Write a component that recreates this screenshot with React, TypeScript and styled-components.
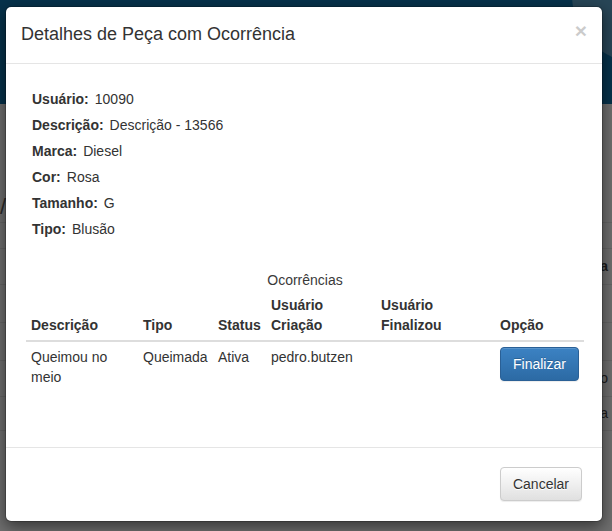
import React from "react";
import styled, { createGlobalStyle } from "styled-components";

const GlobalStyle = createGlobalStyle`
  html, body { margin: 0; padding: 0; }
  body {
    font-family: "Liberation Sans", Arial, Helvetica, sans-serif;
    font-size: 14px;
    line-height: 1.42857;
    color: #333;
    background: #6f6f6f;
  }
  * { box-sizing: border-box; }
`;

const Page = styled.div`
  position: relative;
  width: 612px;
  height: 531px;
  overflow: hidden;
  background: #6f6f6f;
`;

const Navbar = styled.div`
  position: relative;
  height: 104px;
  background: #06324b;
  overflow: hidden;
`;

const Avatar = styled.div`
  position: absolute;
  left: 572px;
  top: -73px;
  width: 136px;
  height: 136px;
  border-radius: 50%;
  background: #284657;
`;

const BgContent = styled.div`
  display: flex;
  flex-direction: column;
  padding-top: 88px;
`;

const BgHeading = styled.div`
  height: 30px;
  font-size: 22px;
  color: #2a2a2a;
  line-height: 30px;
  padding-left: 0;
  overflow: hidden;
  white-space: nowrap;
`;

const BgRow = styled.div<{ $h: number; $bold?: boolean }>`
  height: ${(p) => p.$h}px;
  border-top: 1px solid #656565;
  display: flex;
  align-items: center;
  justify-content: flex-end;
  padding-right: 4px;
  color: #1c1c1c;
  font-weight: ${(p) => (p.$bold ? 700 : 400)};
`;

const Modal = styled.div`
  position: absolute;
  left: 5px;
  top: 6px;
  width: 598px;
  background: #fff;
  border: 1px solid rgba(0, 0, 0, 0.2);
  border-radius: 6px;
  box-shadow: 0 5px 15px rgba(0, 0, 0, 0.5);
  background-clip: padding-box;
`;

const Header = styled.div`
  display: flex;
  justify-content: space-between;
  align-items: flex-start;
  padding: 15px;
  border-bottom: 1px solid #e5e5e5;
`;

const Title = styled.h4`
  margin: 0;
  font-size: 18px;
  font-weight: 400;
  line-height: 1.42857;
  color: #333;
`;

const Close = styled.button`
  background: transparent;
  border: 0;
  padding: 0;
  margin-top: -2px;
  font-family: "Liberation Sans", Arial, sans-serif;
  font-size: 21px;
  font-weight: 700;
  line-height: 1;
  color: #000;
  opacity: 0.2;
  text-shadow: 0 1px 0 #fff;
  cursor: pointer;
`;

const Body = styled.div`
  padding: 20px;
`;

const InfoList = styled.div`
  display: flex;
  flex-direction: column;
  gap: 6px;
  padding: 5px 6px 0;
`;

const InfoRow = styled.div`
  line-height: 20px;
  display: flex;
  gap: 6px;
`;

const Label = styled.span`
  font-weight: 700;
`;

const Table = styled.table`
  width: 100%;
  margin-top: 31px;
  margin-bottom: 20px;
  border-collapse: collapse;
  table-layout: fixed;
`;

const Caption = styled.caption`
  text-align: center;
  color: #3a3a3a;
  line-height: 20px;
`;

const Th = styled.th<{ $nowrap?: boolean }>`
  text-align: left;
  vertical-align: bottom;
  padding: 5px;
  line-height: 20px;
  font-weight: 700;
  border-bottom: 2px solid #ddd;
  white-space: ${(p) => (p.$nowrap ? "nowrap" : "normal")};
`;

const Td = styled.td<{ $nowrap?: boolean }>`
  vertical-align: top;
  padding: 5px;
  line-height: 20px;
  white-space: ${(p) => (p.$nowrap ? "nowrap" : "normal")};
`;

const Btn = styled.button<{ $primary?: boolean }>`
  display: inline-block;
  padding: 6px 12px;
  font-family: "Liberation Sans", Arial, sans-serif;
  font-size: 14px;
  line-height: 20px;
  border-radius: 4px;
  border: 1px solid ${(p) => (p.$primary ? "#2a6096" : "#ccc")};
  color: ${(p) => (p.$primary ? "#fff" : "#333")};
  background-image: ${(p) =>
    p.$primary
      ? "linear-gradient(to bottom, #3c82c3 0, #2c6aa4 100%)"
      : "linear-gradient(to bottom, #fff 0, #e0e0e0 100%)"};
  text-shadow: ${(p) => (p.$primary ? "0 -1px 0 rgba(0,0,0,.2)" : "0 1px 0 #fff")};
  box-shadow: inset 0 1px 0 rgba(255, 255, 255, 0.15), 0 1px 1px rgba(0, 0, 0, 0.075);
  cursor: pointer;
`;

const Footer = styled.div`
  margin-top: 15px;
  padding: 19px 20px 20px;
  border-top: 1px solid #e5e5e5;
  display: flex;
  justify-content: flex-end;
`;

const info: [string, string][] = [
  ["Usuário:", "10090"],
  ["Descrição:", "Descrição - 13566"],
  ["Marca:", "Diesel"],
  ["Cor:", "Rosa"],
  ["Tamanho:", "G"],
  ["Tipo:", "Blusão"],
];

const cols = [112, 75, 53, 110, 119, 89];

export default function App() {
  return (
    <>
      <GlobalStyle />
      <Page>
        <Navbar>
          <Avatar />
        </Navbar>
        <BgContent>
          <BgHeading>/</BgHeading>
          <BgRow $h={26} />
          <BgRow $h={36} $bold>
            Nota
          </BgRow>
          <BgRow $h={38} />
          <BgRow $h={38} />
          <BgRow $h={36}>Estorno</BgRow>
          <BgRow $h={34}>Entra</BgRow>
          <BgRow $h={40} />
        </BgContent>
        <Modal>
          <Header>
            <Title>Detalhes de Peça com Ocorrência</Title>
            <Close aria-label="Fechar">×</Close>
          </Header>
          <Body>
            <InfoList>
              {info.map(([l, v]) => (
                <InfoRow key={l}>
                  <Label>{l}</Label>
                  <span>{v}</span>
                </InfoRow>
              ))}
            </InfoList>
            <Table>
              <Caption>Ocorrências</Caption>
              <colgroup>
                {cols.map((w, i) => (
                  <col key={i} style={{ width: w }} />
                ))}
              </colgroup>
              <thead>
                <tr>
                  <Th>Descrição</Th>
                  <Th>Tipo</Th>
                  <Th $nowrap>Status</Th>
                  <Th>Usuário Criação</Th>
                  <Th>Usuário Finalizou</Th>
                  <Th>Opção</Th>
                </tr>
              </thead>
              <tbody>
                <tr>
                  <Td>Queimou no meio</Td>
                  <Td $nowrap>Queimada</Td>
                  <Td>Ativa</Td>
                  <Td>pedro.butzen</Td>
                  <Td></Td>
                  <Td>
                    <Btn $primary>Finalizar</Btn>
                  </Td>
                </tr>
              </tbody>
            </Table>
          </Body>
          <Footer>
            <Btn>Cancelar</Btn>
          </Footer>
        </Modal>
      </Page>
    </>
  );
}
